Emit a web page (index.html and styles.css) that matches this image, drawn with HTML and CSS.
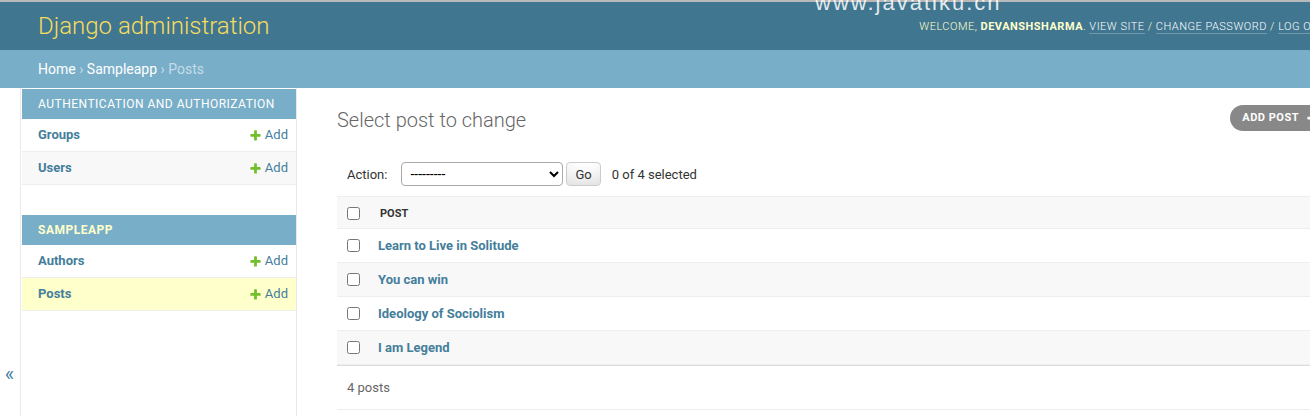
FILE: index.html
```html
<!DOCTYPE html>
<html lang="en">
<head>
<meta charset="utf-8">
<title>Select post to change | Django site admin</title>
<link rel="stylesheet" href="styles.css">
</head>
<body>
<div class="watermark">www.javatiku.cn</div>
<header class="header">
  <h1 class="site-name">Django administration</h1>
  <div class="user-tools">Welcome, <strong>devanshsharma</strong>. <a href="#">View site</a> / <a href="#">Change password</a> / <a href="#">Log out</a></div>
</header>
<div class="breadcrumbs"><a href="#">Home</a> › <a href="#">Sampleapp</a> › Posts</div>
<div class="main">
  <button class="toggle" type="button">«</button>
  <nav class="sidebar">
    <div class="module">
      <div class="caption">Authentication and Authorization</div>
      <div class="mrow"><a class="model" href="#">Groups</a><a class="addlink" href="#"><svg width="13" height="13" viewBox="0 0 1792 1792"><path fill="#70bf2b" d="M1600 796v192q0 40-28 68t-68 28h-416v416q0 40-28 68t-68 28h-192q-40 0-68-28t-28-68v-416h-416q-40 0-68-28t-28-68v-192q0-40 28-68t68-28h416v-416q0-40 28-68t68-28h192q40 0 68 28t28 68v416h416q40 0 68 28t28 68z"/></svg>Add</a></div>
      <div class="mrow alt"><a class="model" href="#">Users</a><a class="addlink" href="#"><svg width="13" height="13" viewBox="0 0 1792 1792"><path fill="#70bf2b" d="M1600 796v192q0 40-28 68t-68 28h-416v416q0 40-28 68t-68 28h-192q-40 0-68-28t-28-68v-416h-416q-40 0-68-28t-28-68v-192q0-40 28-68t68-28h416v-416q0-40 28-68t68-28h192q40 0 68 28t28 68v416h416q40 0 68 28t28 68z"/></svg>Add</a></div>
    </div>
    <div class="module">
      <div class="caption current-app">Sampleapp</div>
      <div class="mrow"><a class="model" href="#">Authors</a><a class="addlink" href="#"><svg width="13" height="13" viewBox="0 0 1792 1792"><path fill="#70bf2b" d="M1600 796v192q0 40-28 68t-68 28h-416v416q0 40-28 68t-68 28h-192q-40 0-68-28t-28-68v-416h-416q-40 0-68-28t-28-68v-192q0-40 28-68t68-28h416v-416q0-40 28-68t68-28h192q40 0 68 28t28 68v416h416q40 0 68 28t28 68z"/></svg>Add</a></div>
      <div class="mrow current"><a class="model" href="#">Posts</a><a class="addlink" href="#"><svg width="13" height="13" viewBox="0 0 1792 1792"><path fill="#70bf2b" d="M1600 796v192q0 40-28 68t-68 28h-416v416q0 40-28 68t-68 28h-192q-40 0-68-28t-28-68v-416h-416q-40 0-68-28t-28-68v-192q0-40 28-68t68-28h416v-416q0-40 28-68t68-28h192q40 0 68 28t28 68v416h416q40 0 68 28t28 68z"/></svg>Add</a></div>
    </div>
  </nav>
  <div class="content">
    <div class="content-head">
      <h1 class="title">Select post to change</h1>
      <a class="object-tool" href="#">Add post <svg width="13" height="13" viewBox="0 0 1792 1792"><path fill="#ffffff" d="M1600 736v192q0 40-28 68t-68 28h-416v416q0 40-28 68t-68 28h-192q-40 0-68-28t-28-68v-416h-416q-40 0-68-28t-28-68v-192q0-40 28-68t68-28h416v-416q0-40 28-68t68-28h192q40 0 68 28t28 68v416h416q40 0 68 28t28 68z"/></svg></a>
    </div>
    <div class="changelist">
      <div class="actions">
        <label class="action-label">Action:</label>
        <select class="action-select"><option>---------</option></select>
        <button class="go" type="button">Go</button>
        <span class="counter">0 of 4 selected</span>
      </div>
      <table class="result-list">
        <thead>
          <tr><th class="cb"><input type="checkbox"></th><th class="col"><span class="text">Post</span></th></tr>
        </thead>
        <tbody>
          <tr class="row1"><td class="cb"><input type="checkbox"></td><th class="field"><a href="#">Learn to Live in Solitude</a></th></tr>
          <tr class="row2"><td class="cb"><input type="checkbox"></td><th class="field"><a href="#">You can win</a></th></tr>
          <tr class="row1"><td class="cb"><input type="checkbox"></td><th class="field"><a href="#">Ideology of Sociolism</a></th></tr>
          <tr class="row2"><td class="cb"><input type="checkbox"></td><th class="field"><a href="#">I am Legend</a></th></tr>
        </tbody>
      </table>
      <p class="paginator">4 posts</p>
    </div>
  </div>
</div>
</body>
</html>
```

FILE: styles.css
```css
html {
  overflow: hidden;
}
body {
  margin: 0;
  width: 1366px;
  position: relative;
  font-family: Roboto, "Liberation Sans", sans-serif;
  font-size: 14px;
  color: #333;
  background: #fff;
}
a {
  color: #447e9b;
  text-decoration: none;
}
.watermark {
  position: absolute;
  left: 815px;
  top: -8px;
  z-index: 5;
  font-family: "Liberation Sans", Arial, sans-serif;
  font-size: 22px;
  line-height: 22px;
  letter-spacing: 2px;
  color: rgba(255, 255, 255, 0.85);
  pointer-events: none;
}
.header {
  display: flex;
  justify-content: space-between;
  align-items: center;
  padding: 10px 40px 10px 38px;
  background: #417690;
  color: #ffc;
  border-top: 2px solid #b9b9b9;
}
.site-name {
  margin: 0;
  font-size: 24px;
  font-weight: 300;
  color: #f5dd5d;
}
.user-tools {
  font-size: 11px;
  font-weight: 300;
  letter-spacing: 0.5px;
  text-transform: uppercase;
  white-space: nowrap;
}
.user-tools strong {
  font-weight: 700;
}
.user-tools a {
  color: #fff;
  border-bottom: 1px solid rgba(255, 255, 255, 0.25);
}
.breadcrumbs {
  padding: 10px 38px;
  background: #79aec8;
  color: #c4dce8;
  font-size: 14px;
  line-height: 18px;
}
.breadcrumbs a {
  color: #fff;
}
.main {
  display: flex;
  height: 572px;
}
.toggle {
  flex: 0 0 21px;
  width: 21px;
  box-sizing: border-box;
  display: flex;
  align-items: center;
  justify-content: center;
  padding: 0 1px 0 0;
  border: 0;
  border-right: 1px solid #eaeaea;
  background: #fff;
  color: #447e9b;
  font-family: Roboto, "Liberation Sans", sans-serif;
  font-size: 20px;
}
.sidebar {
  flex: 0 0 276px;
  box-sizing: border-box;
  padding-left: 1px;
  border-top: 1px solid transparent;
  border-right: 1px solid #eaeaea;
}
.module {
  margin-bottom: 30px;
}
.caption {
  padding: 8px 8px 8px 16px;
  background: #79aec8;
  color: #fff;
  font-size: 12px;
  line-height: 14px;
  letter-spacing: 0.5px;
  text-transform: uppercase;
  white-space: nowrap;
}
.caption.current-app {
  color: #ffc;
  font-weight: 700;
}
.mrow {
  display: flex;
  justify-content: space-between;
  align-items: center;
  padding: 8px 8px 8px 16px;
  font-size: 13px;
  line-height: 16px;
  border-bottom: 1px solid #eee;
  background: #fff;
}
.mrow.alt {
  background: #f8f8f8;
}
.mrow.current {
  background: #ffc;
}
.model {
  font-weight: 700;
}
.addlink {
  display: flex;
  align-items: center;
  gap: 3px;
}
.content {
  flex: 1;
  min-width: 0;
  padding: 20px 40px;
}
.content-head {
  display: flex;
  justify-content: space-between;
  align-items: flex-start;
  margin-bottom: 20px;
}
.title {
  margin: 0;
  font-size: 20px;
  font-weight: 300;
  color: #666;
}
.object-tool {
  display: flex;
  align-items: center;
  gap: 7px;
  margin-top: -3px;
  padding: 3px 7px 3px 12px;
  border-radius: 15px;
  background: #888;
  color: #fff;
  font-size: 11px;
  font-weight: 700;
  line-height: 20px;
  letter-spacing: 0.5px;
  text-transform: uppercase;
}
.actions {
  display: flex;
  align-items: center;
  padding: 10px;
  height: 24px;
  font-size: 13px;
  color: #333;
}
.action-select {
  width: 162px;
  height: 24px;
  margin-left: 14px;
  padding: 0 0 0 4px;
  border: 1px solid #aaa;
  border-radius: 4px;
  background: #fff;
  color: #000;
  font-family: Roboto, "Liberation Sans", sans-serif;
  font-size: 14px;
}
.go {
  height: 24px;
  margin-left: 3px;
  padding: 4px 8px;
  border: 1px solid #ccc;
  border-radius: 4px;
  background: #fff;
  box-shadow: inset 0 -15px 20px -10px rgba(0, 0, 0, 0.15);
  color: #333;
  font-family: Roboto, "Liberation Sans", sans-serif;
  font-size: 13px;
  line-height: 1;
}
.counter {
  margin-left: 11px;
}
.result-list {
  width: 100%;
  border-collapse: separate;
  border-spacing: 0;
  font-size: 13px;
}
.result-list thead th {
  background: #f8f8f8;
  border-top: 1px solid #eee;
  border-bottom: 1px solid #eee;
  vertical-align: middle;
  text-align: left;
}
.result-list thead th.cb {
  width: 13px;
  padding: 10px 10px 8px;
}
.result-list thead th.col {
  padding: 0;
  font-size: 11px;
  font-weight: 700;
  color: #333;
  text-transform: uppercase;
}
.result-list .text {
  display: block;
  padding: 1px 10px 0;
}
.result-list input {
  display: block;
  width: 13px;
  height: 13px;
  margin: 0 auto;
}
.result-list tbody td,
.result-list tbody th {
  padding: 8px;
  line-height: 17px;
  border-bottom: 1px solid #eee;
  text-align: left;
  vertical-align: top;
}
.result-list tbody td.cb {
  width: 13px;
  padding: 8px 10px;
}
.result-list tbody td.cb input {
  margin: 2px auto;
}
.result-list tbody th.field {
  font-weight: 700;
}
.row1 {
  background: #fff;
}
.row2 {
  background: #f8f8f8;
}
.paginator {
  margin: 0;
  padding: 11px 10px 10px;
  font-size: 13px;
  line-height: 22px;
  color: #666;
  border-top: 1px solid #ddd;
  border-bottom: 1px solid #eee;
}
```
